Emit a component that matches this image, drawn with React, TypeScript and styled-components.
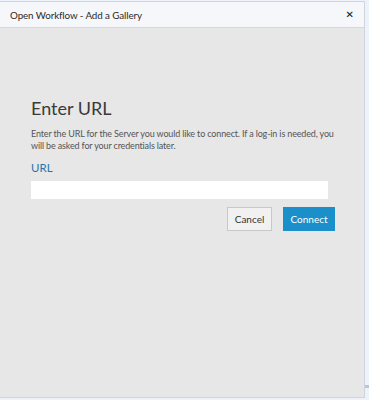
import styled, { createGlobalStyle } from "styled-components";

const GlobalStyle = createGlobalStyle`
  html, body {
    margin: 0;
    padding: 0;
    background: #e8edf7;
  }
  body {
    font-family: Lato, "Open Sans", sans-serif;
  }
`;

const Page = styled.div`
  width: 369px;
  height: 400px;
  position: relative;
  overflow: hidden;
  background: #eef2fa;
`;

const Stripe = styled.div`
  position: absolute;
  left: 0;
  right: 0;
  top: 385px;
  height: 3px;
  background: #b9c6de;
`;

const Dialog = styled.div`
  position: relative;
  z-index: 1;
  width: 364px;
  height: 395px;
  margin-top: 1px;
  border: 1px solid #cfd4dd;
  border-left: none;
  background: #e7e7e7;
  display: flex;
  flex-direction: column;
`;

const Header = styled.div`
  height: 25px;
  flex-shrink: 0;
  display: flex;
  align-items: center;
  justify-content: space-between;
  padding: 0 10px 0 10px;
  background: #f5f7fb;
  border-bottom: 1px solid #d3d8e1;
`;

const Title = styled.span`
  font-size: 9.8px;
  letter-spacing: -0.1px;
  color: #2b2b2b;
`;

const Close = styled.span`
  font-family: "DejaVu Sans", sans-serif;
  font-size: 10px;
  font-weight: bold;
  color: #111;
`;

const Body = styled.div`
  padding: 68px 28px 0 31px;
  display: flex;
  flex-direction: column;
`;

const Heading = styled.h1`
  margin: 0;
  font-size: 18px;
  font-weight: 400;
  color: #3a3a3a;
  line-height: 24px;
`;

const Description = styled.p`
  margin: 8px 0 0;
  font-size: 9px;
  letter-spacing: -0.15px;
  line-height: 12px;
  color: #555;
`;

const Label = styled.div`
  margin-top: 8px;
  font-size: 11.5px;
  color: #2576ab;
  line-height: 16px;
`;

const Input = styled.input`
  margin-top: 5px;
  width: 297px;
  height: 18px;
  box-sizing: border-box;
  border: none;
  background: #fff;
  outline: none;
`;

const Actions = styled.div`
  display: flex;
  justify-content: flex-end;
  gap: 11px;
  margin-top: 8px;
  width: 304px;
`;

const Button = styled.button<{ $primary?: boolean }>`
  height: 24px;
  width: ${(p) => (p.$primary ? "52px" : "45px")};
  box-sizing: border-box;
  padding: 0;
  font-family: Lato, "Open Sans", sans-serif;
  font-size: 10px;
  border: 1px solid ${(p) => (p.$primary ? "#1a8fc9" : "#c8c8c8")};
  background: ${(p) => (p.$primary ? "#1a8fc9" : "#f1f1f1")};
  color: ${(p) => (p.$primary ? "#fff" : "#333")};
`;

export default function App() {
  return (
    <Page>
      <GlobalStyle />
      <Stripe />
      <Dialog>
        <Header>
          <Title>Open Workflow - Add a Gallery</Title>
          <Close>✕</Close>
        </Header>
        <Body>
          <Heading>Enter URL</Heading>
          <Description>
            Enter the URL for the Server you would like to connect. If a log-in
            is needed, you will be asked for your credentials later.
          </Description>
          <Label>URL</Label>
          <Input />
          <Actions>
            <Button>Cancel</Button>
            <Button $primary>Connect</Button>
          </Actions>
        </Body>
      </Dialog>
    </Page>
  );
}
